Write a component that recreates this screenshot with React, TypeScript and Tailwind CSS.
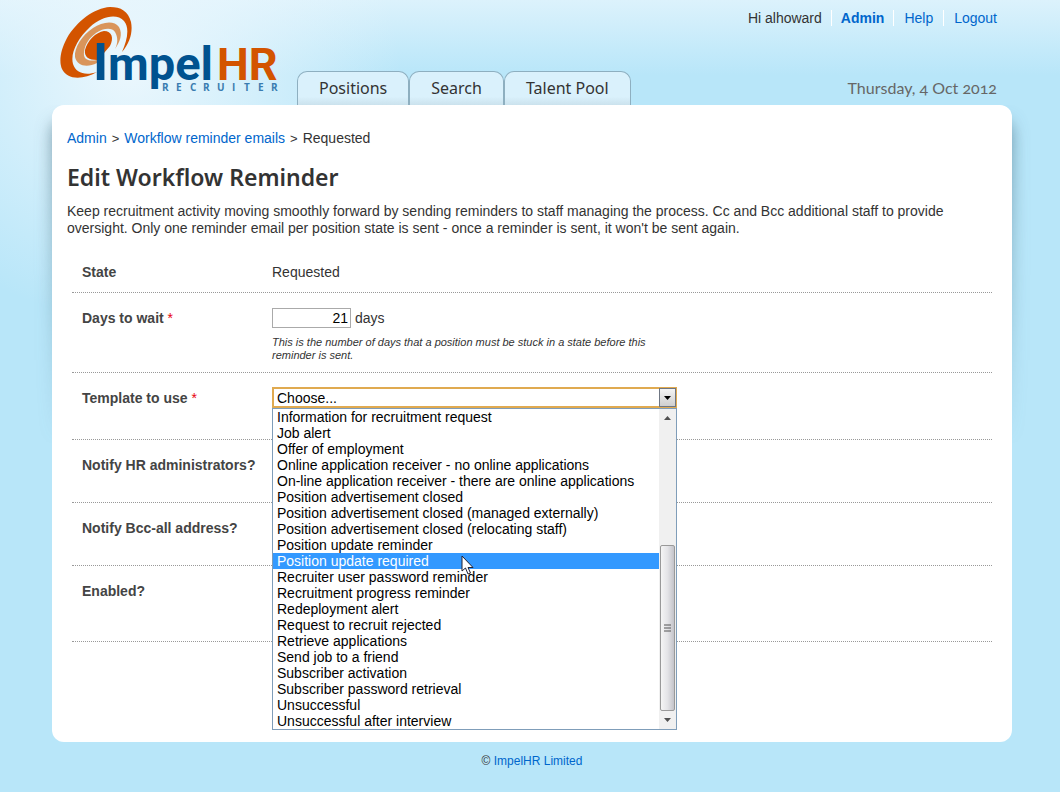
import type { ReactNode } from 'react';

const tabs = ['Positions', 'Search', 'Talent Pool'];

const templates = [
  'Information for recruitment request',
  'Job alert',
  'Offer of employment',
  'Online application receiver - no online applications',
  'On-line application receiver - there are online applications',
  'Position advertisement closed',
  'Position advertisement closed (managed externally)',
  'Position advertisement closed (relocating staff)',
  'Position update reminder',
  'Position update required',
  'Recruiter user password reminder',
  'Recruitment progress reminder',
  'Redeployment alert',
  'Request to recruit rejected',
  'Retrieve applications',
  'Send job to a friend',
  'Subscriber activation',
  'Subscriber password retrieval',
  'Unsuccessful',
  'Unsuccessful after interview',
];

const highlighted = 'Position update required';

function Logo() {
  return (
    <svg viewBox="0 0 224 92" className="h-[92px] w-[224px]" role="img" aria-label="ImpelHR Recruiter">
      <path
        d="M62 45C70 36 73 25 71 15C68 4 61 0 50 0C34 1 17 14 7 31C0 44 -1 55 2 62C7 73 23 73 37 65C25 69 16 66 13 57C10 46 18 31 30 20C42 9 57 6 64 14C70 21 67 34 62 45Z"
        fill="#d35400"
      />
      <path
        d="M55 42C60 35 63 27 59 20C54 13 42 15 33 21C22 28 14 41 15 50C17 59 27 61 37 56V53C28 55 23 52 24 45C25 37 29 31 36 26C43 21 52 20 55 25C58 30 58 36 55 42Z"
        fill="#d9955b"
      />
      <path d="M37 53C29 53 24 50 25 43C27 34 36 25 44 24C52 24 54 31 50 39L44 46V53Z" fill="#d35400" />
      <g className="font-['Roboto',sans-serif] font-bold" fontSize="45">
        <text x="33" y="73" fontSize="52" fill="#00528f">I</text>
        <text x="48" y="73" fontSize="47" fill="#00528f">mpel</text>
        <text x="157" y="73" fill="#d35400">HR</text>
      </g>
      <text
        x="102 116 130 143 157 172 184 198 211"
        y="84"
        fontSize="10"
        fill="#3a7cb0"
        className="font-['Open_Sans',sans-serif] font-bold"
      >
        RECRUITER
      </text>
    </svg>
  );
}

type RowProps = {
  label: string;
  htmlFor?: string;
  required?: boolean;
  height: string;
  children?: ReactNode;
};

function Row({ label, htmlFor, required, height, children }: RowProps) {
  return (
    <div className={`flex border-b border-dotted border-[#999] px-[10px] pt-[15px] ${height}`}>
      <div className="w-[190px] shrink-0 font-bold leading-5 text-[#444]">
        {htmlFor ? <label htmlFor={htmlFor}>{label}</label> : label}
        {required && <span className="font-normal text-red-600"> *</span>}
      </div>
      <div className="min-w-0 flex-1 leading-5">{children}</div>
    </div>
  );
}

function TemplateSelect() {
  return (
    <div className="relative -mt-px w-[405px] text-black">
      <select
        id="template"
        className="block h-[21px] w-full appearance-none border-2 border-[#e0aa50] bg-white pl-[3px] leading-4 outline-none"
      >
        <option>Choose...</option>
        {templates.map((t) => (
          <option key={t}>{t}</option>
        ))}
      </select>
      <span className="pointer-events-none absolute top-px right-px flex h-[19px] w-[17px] items-center justify-center border border-[#6f7683] bg-linear-to-b from-[#f4f4f4] to-[#cfcfcf]">
        <svg viewBox="0 0 7 4" className="h-1 w-[7px]"><path d="M0 0H7L3.5 4Z" /></svg>
      </span>
      <div className="absolute top-full left-0 z-10 flex w-full border border-[#7f9db9] bg-white">
        <ul role="listbox" aria-label="Template to use" className="flex-1">
          {templates.map((t) => (
            <li
              key={t}
              role="option"
              aria-selected={t === highlighted}
              className={`h-4 pl-1 leading-4 whitespace-nowrap ${t === highlighted ? 'bg-[#3399ff] text-white' : ''}`}
            >
              {t}
            </li>
          ))}
        </ul>
        <div className="flex w-[17px] flex-col items-center bg-[#f0f0f0]">
          <svg viewBox="0 0 7 4" className="mt-[7px] h-1 w-[7px]"><path d="M0 4H7L3.5 0Z" fill="#505050" /></svg>
          <div className="mt-[125px] flex h-[166px] w-[15px] items-center justify-center rounded-xs border border-[#999] bg-linear-to-r from-[#f5f5f5] via-[#e4e4e7] to-[#c4c4ca]">
            <svg viewBox="0 0 8 8" className="size-2"><path d="M0 1H7M0 4H7M0 7H7" stroke="#555" /></svg>
          </div>
          <svg viewBox="0 0 7 4" className="mt-[7px] h-1 w-[7px]"><path d="M0 0H7L3.5 4Z" fill="#505050" /></svg>
        </div>
        <svg viewBox="0 0 13 20" className="absolute top-[146px] left-[188px] h-5 w-[13px]">
          <path d="M1 1V16L4.5 13L7 19L9.5 18L7 12.5H12Z" fill="#fff" stroke="#223" />
        </svg>
      </div>
    </div>
  );
}

export default function App() {
  return (
    <div className="min-h-screen bg-[#b8e6f9] bg-[radial-gradient(ellipse_270px_250px_at_130px_70px,#ebf7fd,#b8e6f900),linear-gradient(#dcf2fc,#b8e6f9_75px)] font-['Liberation_Sans',Arial,sans-serif] text-sm text-[#333]">
      <div className="mx-[52px] mr-12">
        <header className="flex h-[105px] justify-between">
          <div className="flex">
            <a href="#" className="ml-2 w-[237px] pt-[7px]"><Logo /></a>
            <nav className="flex items-end font-['Noto_Sans',sans-serif] text-base text-[#333]">
              {tabs.map((tab) => (
                <a
                  key={tab}
                  href="#"
                  className="h-[34px] rounded-t-[10px] border border-b-0 border-[#8eafc0] bg-linear-to-b from-[#daf1fc] from-75% to-[#cbe2ed] px-[21px] leading-8 whitespace-nowrap"
                >
                  {tab}
                </a>
              ))}
            </nav>
          </div>
          <div className="flex flex-col items-end justify-between pt-[10px] pr-[15px] pb-[7px]">
            <div className="flex divide-x divide-white leading-4 text-[#06c]">
              <span className="pr-[9px] text-[#333]">Hi alhoward</span>
              <a href="#" className="px-[9px] font-bold">Admin</a>
              <a href="#" className="px-[10px]">Help</a>
              <a href="#" className="pl-[10px]">Logout</a>
            </div>
            <div className="font-['Lato',sans-serif] text-base leading-5 text-[#666] oldstyle-nums">Thursday, 4 Oct 2012</div>
          </div>
        </header>

        <div className="relative">
          {/* side shadow that dies out down the panel */}
          <div className="absolute -inset-x-6 top-0 h-[340px] overflow-hidden mask-[linear-gradient(black,transparent)]">
            <div className="mx-6 mt-3 h-[400px] rounded-xl shadow-[0_4px_16px_#446a7cb3]" />
          </div>
          <main className="relative min-h-[637px] rounded-xl bg-white px-[15px] pt-[25px] pb-24">
            <nav className="leading-4">
              <a href="#" className="text-[#06c]">Admin</a>
              <span className="mx-[5px] text-[13px]">&gt;</span>
              <a href="#" className="text-[#06c]">Workflow reminder emails</a>
              <span className="mx-[5px] text-[13px]">&gt;</span>
              <span>Requested</span>
            </nav>
            <h1 className="mt-[14px] font-['Noto_Sans',sans-serif] text-[23px] leading-8 font-semibold">Edit Workflow Reminder</h1>
            <p className="mt-[10px] leading-[17px]">
              Keep recruitment activity moving smoothly forward by sending reminders to staff managing the process. Cc and Bcc additional staff to provide oversight. Only one reminder email per position state is sent - once a reminder is sent, it won't be sent again.
            </p>
            <form className="mx-[5px] mt-[10px]">
              <Row label="State" height="h-[46px]">Requested</Row>
              <Row label="Days to wait" htmlFor="days" required height="h-20">
                <div className="flex items-center gap-1">
                  <input
                    id="days"
                    type="text"
                    defaultValue="21"
                    className="h-5 w-[79px] border border-[#aaa] bg-white px-0.5 text-right text-black"
                  />
                  days
                </div>
                <p className="mt-2 max-w-[400px] text-[11px] leading-[13px] italic">
                  This is the number of days that a position must be stuck in a state before this reminder is sent.
                </p>
              </Row>
              <Row label="Template to use" htmlFor="template" required height="h-[67px]">
                <TemplateSelect />
              </Row>
              <Row label="Notify HR administrators?" height="h-[63px]" />
              <Row label="Notify Bcc-all address?" height="h-[63px]" />
              <Row label="Enabled?" height="h-[76px]" />
            </form>
          </main>
        </div>
        <footer className="py-[11px] text-center text-xs leading-4">
          © <a href="#" className="text-[#06c]">ImpelHR Limited</a>
        </footer>
      </div>
    </div>
  );
}
